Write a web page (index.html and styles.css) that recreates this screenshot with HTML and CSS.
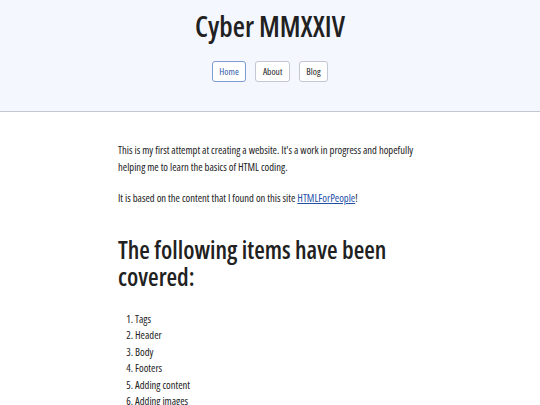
FILE: index.html
```html
<!DOCTYPE html>
<html lang="en">
<head>
<meta charset="utf-8">
<title>Cyber MMXXIV</title>
<link rel="stylesheet" href="styles.css">
</head>
<body>
<header class="site-header">
  <h1 class="site-title">Cyber MMXXIV</h1>
  <nav class="site-nav">
    <a class="nav-link current" href="#">Home</a>
    <a class="nav-link" href="#">About</a>
    <a class="nav-link" href="#">Blog</a>
  </nav>
</header>
<main class="content">
  <p>This is my first attempt at creating a website. It's a work in progress and hopefully helping me to learn the basics of HTML coding.</p>
  <p>It is based on the content that I found on this site <a href="#">HTMLForPeople</a>!</p>
  <h2>The following items have been covered:</h2>
  <ol class="topics">
    <li>Tags</li>
    <li>Header</li>
    <li>Body</li>
    <li>Footers</li>
    <li>Adding content</li>
    <li>Adding images</li>
    <li>Links</li>
  </ol>
</main>
</body>
</html>
```
FILE: styles.css
```css
html, body {
  margin: 0;
  padding: 0;
}
body {
  font-family: "Open Sans", "Noto Sans", sans-serif;
  font-stretch: 75%;
  font-size: 10.6px;
  line-height: 16.5px;
  color: #212121;
  background: #fff;
}
.site-header {
  background: #f5f7ff;
  border-bottom: 1px solid #c4c6d0;
  text-align: center;
  padding: 8px 0 29px;
}
.site-title {
  margin: 0;
  font-size: 28px;
  line-height: 36px;
  font-weight: 600;
  color: #212121;
}
.site-nav {
  margin-top: 17px;
  display: flex;
  justify-content: center;
  gap: 9px;
  font-size: 9.5px;
  line-height: 11px;
}
.nav-link {
  display: inline-block;
  border: 1px solid #c3c6d3;
  border-radius: 3px;
  padding: 4px 6.5px;
  color: #212121;
  text-decoration: none;
  background: #fff;
}
.nav-link.current {
  border-color: #7d9bd0;
  color: #2f5aa8;
}
.content {
  width: 304px;
  margin: 0 auto;
  padding-top: 30px;
}
.content p {
  margin: 0 0 15px;
}
.content a {
  color: #2550a8;
}
h2 {
  font-size: 24.3px;
  line-height: 27px;
  font-weight: 600;
  margin: 29px 0 21px;
}
.topics {
  margin: 0;
  padding-left: 17px;
}
```
